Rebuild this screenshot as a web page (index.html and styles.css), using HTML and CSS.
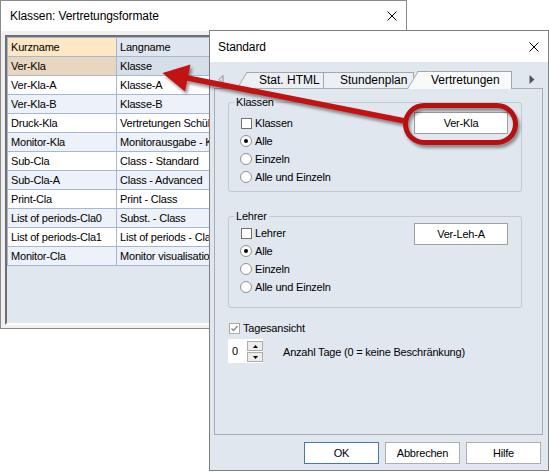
FILE: index.html
```html
<!DOCTYPE html>
<html>
<head>
<meta charset="utf-8">
<title>Vertretungsformate</title>
<link rel="stylesheet" href="styles.css">
</head>
<body>
<div class="desk">

  <div class="win win-left">
    <div class="titlebar tb-left">
      <span class="title">Klassen: Vertretungsformate</span>
      <svg class="close" width="10" height="10" viewBox="0 0 10 10"><path d="M0.5 0.5 L9.5 9.5 M9.5 0.5 L0.5 9.5" stroke="#000" stroke-width="1" fill="none"/></svg>
    </div>
    <div class="win-body">
      <div class="frame">
        <div class="grid">
          <div class="row head"><div class="cell c1">Kurzname</div><div class="cell">Langname</div></div>
          <div class="row sel"><div class="cell c1">Ver-Kla</div><div class="cell">Klasse</div></div>
          <div class="row"><div class="cell c1">Ver-Kla-A</div><div class="cell">Klasse-A</div></div>
          <div class="row alt"><div class="cell c1">Ver-Kla-B</div><div class="cell">Klasse-B</div></div>
          <div class="row"><div class="cell c1">Druck-Kla</div><div class="cell">Vertretungen Schüler</div></div>
          <div class="row alt"><div class="cell c1">Monitor-Kla</div><div class="cell">Monitorausgabe - Klassen</div></div>
          <div class="row"><div class="cell c1">Sub-Cla</div><div class="cell">Class - Standard</div></div>
          <div class="row alt"><div class="cell c1">Sub-Cla-A</div><div class="cell">Class - Advanced</div></div>
          <div class="row"><div class="cell c1">Print-Cla</div><div class="cell">Print - Class</div></div>
          <div class="row alt"><div class="cell c1">List of periods-Cla0</div><div class="cell">Subst. - Class</div></div>
          <div class="row"><div class="cell c1">List of periods-Cla1</div><div class="cell">List of periods - Class</div></div>
          <div class="row alt"><div class="cell c1">Monitor-Cla</div><div class="cell">Monitor visualisation</div></div>
        </div>
      </div>
    </div>
  </div>

  <div class="win dlg">
    <div class="titlebar tb-dlg">
      <span class="title">Standard</span>
      <svg class="close" width="10" height="10" viewBox="0 0 10 10"><path d="M0.5 0.5 L9.5 9.5 M9.5 0.5 L0.5 9.5" stroke="#000" stroke-width="1" fill="none"/></svg>
    </div>
    <div class="dlg-body">
      <div class="tabstrip">
        <svg class="arr arr-l" width="6" height="9" viewBox="0 0 6 9"><path d="M5 0.5 L1 4.5 L5 8.5 Z" fill="none" stroke="#8c8c8c" stroke-width="1"/></svg>
        <div class="tab t1">Stat. HTML</div>
        <div class="tab t2">Stundenplan</div>
        <div class="tab t3 active">Vertretungen</div>
        <svg class="arr arr-r" width="6" height="9" viewBox="0 0 6 9"><path d="M0.5 0 L5.5 4.5 L0.5 9 Z" fill="#555"/></svg>
      </div>
      <div class="panel">
        <fieldset class="grp grp-k">
          <legend>Klassen</legend>
          <div class="grp-in">
            <div class="opts">
              <div class="opt"><span class="cb"></span>Klassen</div>
              <div class="opt"><span class="rb on"></span>Alle</div>
              <div class="opt"><span class="rb"></span>Einzeln</div>
              <div class="opt"><span class="rb"></span>Alle und Einzeln</div>
            </div>
            <div class="valbox">Ver-Kla</div>
          </div>
        </fieldset>
        <fieldset class="grp grp-l">
          <legend>Lehrer</legend>
          <div class="grp-in">
            <div class="opts">
              <div class="opt"><span class="cb"></span>Lehrer</div>
              <div class="opt"><span class="rb on"></span>Alle</div>
              <div class="opt"><span class="rb"></span>Einzeln</div>
              <div class="opt"><span class="rb"></span>Alle und Einzeln</div>
            </div>
            <div class="valbox">Ver-Leh-A</div>
          </div>
        </fieldset>
        <div class="opt day"><span class="cb checked"><svg width="9" height="9" viewBox="0 0 9 9"><path d="M1.5 4.5 L3.5 6.5 L7.5 2" fill="none" stroke="#8a8a8a" stroke-width="1.4"/></svg></span>Tagesansicht</div>
        <div class="spinrow">
          <div class="spin">
            <span class="num">0</span>
            <span class="sbtns">
              <span class="sbtn"><svg width="5" height="3" viewBox="0 0 5 3"><path d="M0 3 L2.5 0 L5 3 Z" fill="#000"/></svg></span>
              <span class="sbtn"><svg width="5" height="3" viewBox="0 0 5 3"><path d="M0 0 L2.5 3 L5 0 Z" fill="#000"/></svg></span>
            </span>
          </div>
          <span class="spinlbl">Anzahl Tage (0 = keine Beschränkung)</span>
        </div>
      </div>
      <div class="btnrow">
        <div class="btn def">OK</div>
        <div class="btn">Abbrechen</div>
        <div class="btn">Hilfe</div>
      </div>
    </div>
  </div>

  <svg class="overlay" width="549" height="472" viewBox="0 0 549 472">
    <g class="anno">
      <rect x="405.5" y="105.5" width="110" height="37" rx="18.5" ry="18.5" fill="none" stroke="#b80f10" stroke-width="5"/>
      <line x1="405" y1="121" x2="185" y2="77.5" stroke="#c21212" stroke-width="5.5"/>
      <polygon points="162.5,73 190.5,64.5 185,91.5" fill="#c21212"/>
    </g>
  </svg>

</div>
</body>
</html>
```

FILE: styles.css
```css
* { box-sizing: border-box; }
html, body { margin: 0; padding: 0; }
body {
  width: 549px;
  height: 472px;
  overflow: hidden;
  background: #ffffff;
  font-family: "Liberation Sans", Arial, sans-serif;
  font-size: 11px;
  letter-spacing: -0.2px;
  color: #000;
}
.desk { position: relative; width: 549px; height: 472px; }

.win {
  position: absolute;
  display: flex;
  flex-direction: column;
  border: 1px solid #8a8a8a;
}
.win-left { left: 0; top: 0; width: 407px; height: 329px; background: #f0f0f0; }
.dlg { left: 209px; top: 30px; width: 340px; height: 441px; background: #e0e7ef; border-color: #7d7d7d; }

.titlebar {
  flex: none;
  background: #ffffff;
  display: flex;
  align-items: center;
  justify-content: space-between;
}
.tb-left { height: 30px; padding: 0 9px 0 9px; }
.tb-dlg { height: 31px; padding: 0 9px 0 8px; }
.title { font-size: 12px; letter-spacing: -0.1px; }
.close { display: block; }

.win-body { flex: 1; padding: 4px 4px 3px 4px; display: flex; }
.frame {
  flex: 1;
  border: 2px solid;
  border-color: #6f6f6f #ffffff #ffffff #6f6f6f;
  background: #e0e7ef;
  overflow: hidden;
}
.grid {
  width: 320px;
  border-left: 1px solid #a6b7d0;
  border-top: 1px solid #a6b7d0;
}
.row {
  display: grid;
  grid-template-columns: 109px 210px;
  height: 19px;
  border-bottom: 1px solid #a6b7d0;
  background: #ffffff;
}
.row.alt { background: #edf1f9; }
.row.head { background: #dfe6ef; }
.row.head .c1 { background: #fde7c4; }
.row.sel { background: #d6deea; }
.row.sel .c1 { background: #e8d7be; }
.cell {
  padding-left: 3px;
  line-height: 18px;
  white-space: nowrap;
  overflow: hidden;
}
.c1 { border-right: 1px solid #a6b7d0; }

.dlg-body {
  flex: 1;
  display: flex;
  flex-direction: column;
  padding: 9px 5px 0 4px;
}
.tabstrip {
  flex: none;
  height: 17px;
  display: flex;
  align-items: flex-end;
  position: relative;
}
.arr { display: block; align-self: center; flex: none; }
.arr-l { margin-left: 4px; }
.arr-r { margin-left: auto; margin-right: 8px; }
.tab {
  position: relative;
  height: 16px;
  font-size: 12px;
  letter-spacing: 0;
  line-height: 15px;
  background: #eceff3;
  border-top: 1px solid #a3a7ac;
  border-right: 1px solid #a3a7ac;
  white-space: nowrap;
  flex: none;
}
.tab::before {
  content: "";
  position: absolute;
  left: -10px;
  top: -1px;
  bottom: 0;
  width: 12px;
  background: inherit;
  border-top: 1px solid #a3a7ac;
  border-left: 1px solid #a3a7ac;
  transform: skewX(-31deg);
  transform-origin: bottom left;
  z-index: -1;
}
.t1 { z-index: 3; margin-left: 23px; width: 77px; padding-left: 12px; }
.t2 { z-index: 2; width: 90px; padding-left: 16px; }
.t3 {
  z-index: 4;
  margin-left: 4px;
  width: 94px;
  height: 18px;
  margin-bottom: -1px;
  padding-left: 13px;
  line-height: 16px;
  background: #f8f9fb;
}
.t3::before { left: -11px; }

.panel {
  flex: none;
  height: 347px;
  border: 1px solid #a7adb5;
  background: #e0e7ef;
  display: flex;
  flex-direction: column;
  align-items: flex-start;
}

.grp {
  margin: 0;
  padding: 0;
  width: 294px;
  border: 1px solid #c3c9d1;
  border-radius: 3px;
  min-width: 0;
}
.grp legend {
  padding: 0 2px;
  margin-left: 5px;
  line-height: 12px;
  font-size: 11px;
}
.grp-k { margin: 7px 0 0 13px; }
.grp-l { margin: 18px 0 0 13px; }
.grp-in {
  display: flex;
  justify-content: space-between;
  align-items: flex-start;
  padding: 6px 13px 5px 12px;
}
.grp-l .grp-in { padding: 2px 13px 11px 12px; }

.opts { display: flex; flex-direction: column; }
.opt {
  display: flex;
  align-items: center;
  height: 18px;
  gap: 3px;
  white-space: nowrap;
}
.cb {
  width: 11px;
  height: 11px;
  border: 1px solid #707070;
  background: #ffffff;
  flex: none;
  display: flex;
  align-items: center;
  justify-content: center;
}
.cb.checked { border-color: #a8a8a8; }
.cb svg { display: block; }
.rb {
  width: 12px;
  height: 12px;
  border-radius: 50%;
  border: 1px solid #8f9194;
  background: #ffffff;
  flex: none;
  margin-left: -1px;
  margin-right: 0;
  display: flex;
  align-items: center;
  justify-content: center;
}
.rb.on::after {
  content: "";
  width: 4px;
  height: 4px;
  border-radius: 50%;
  background: #000;
}

.valbox {
  width: 94px;
  height: 22px;
  background: #ffffff;
  border: 1px solid #a0a0a0;
  display: flex;
  align-items: center;
  justify-content: center;
  flex: none;
}
.grp-k .valbox { margin-top: -2px; }
.grp-l .valbox { margin-top: -1px; }

.day { margin: 11px 0 0 14px; }

.spinrow {
  display: flex;
  align-items: center;
  margin: 2px 0 0 13px;
}
.spin {
  display: flex;
  width: 35px;
  height: 24px;
  background: #ffffff;
}
.num { width: 19px; padding-left: 4px; line-height: 24px; }
.sbtns {
  display: flex;
  flex-direction: column;
  gap: 1px;
  padding-top: 2px;
}
.sbtn {
  width: 16px;
  height: 10px;
  border: 1px solid #adadad;
  background: #ececec;
  display: flex;
  align-items: center;
  justify-content: center;
}
.sbtn svg { display: block; }
.spinlbl { margin-left: 20px; padding-top: 2px; }

.btnrow {
  display: flex;
  justify-content: flex-end;
  gap: 6px;
  margin-top: 7px;
  padding-right: 2px;
}
.btn {
  width: 75px;
  height: 22px;
  border: 1px solid #adadad;
  background: #ffffff;
  display: flex;
  align-items: center;
  justify-content: center;
}
.btn.def { border-color: #4a76b0; }

.overlay {
  position: absolute;
  left: 0;
  top: 0;
  z-index: 10;
  pointer-events: none;
}
.anno { filter: drop-shadow(2px 3px 1.5px rgba(0, 0, 0, 0.4)); }
```
